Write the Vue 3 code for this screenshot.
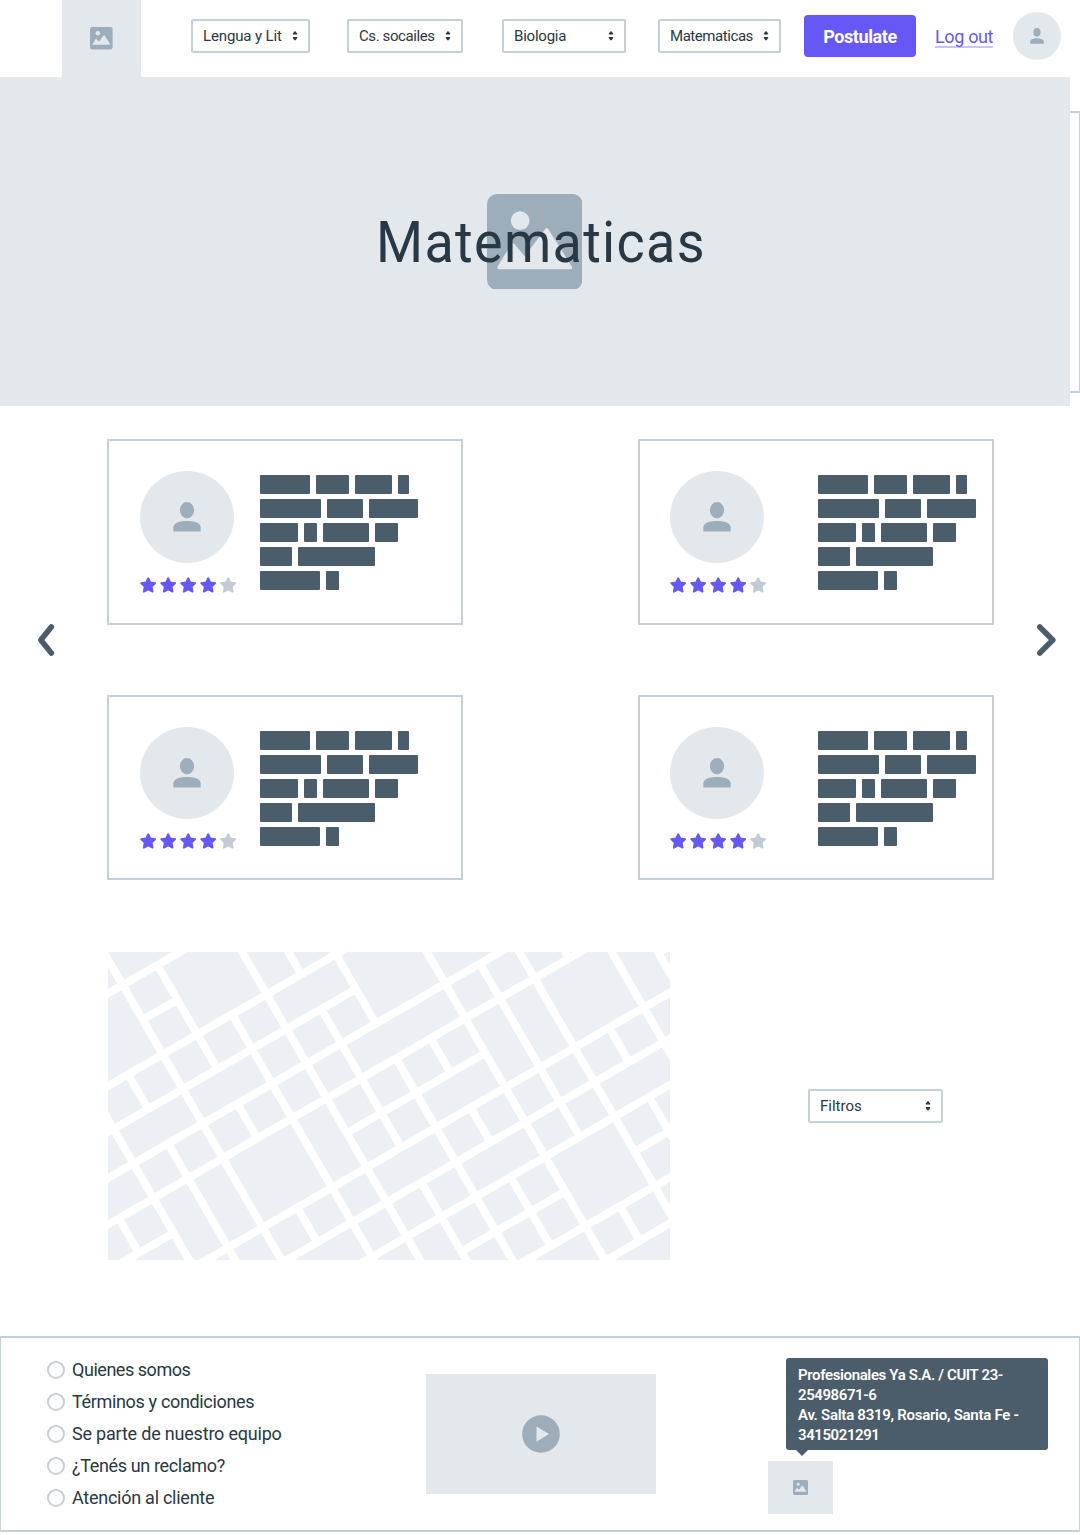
<script setup>
import { h } from 'vue'

const subjects = [
  { label: 'Lengua y Lit', width: 119, gap: 37, spacing: -0.14 },
  { label: 'Cs. socailes', width: 116, gap: 39, spacing: -0.4 },
  { label: 'Biologia', width: 124, gap: 32, spacing: -0.22 },
  { label: 'Matematicas', width: 123, gap: 23, spacing: -0.44 }
]

const words = [
  [49.7, 33, 36.8, 11.4],
  [60.8, 36.1, 49],
  [38, 13, 45.6, 23],
  [31.8, 76.8],
  [60, 13]
]

const links = [
  { label: 'Quienes somos', spacing: -0.46 },
  { label: 'Términos y condiciones', spacing: -0.34 },
  { label: 'Se parte de nuestro equipo', spacing: -0.2 },
  { label: '¿Tenés un reclamo?', spacing: -0.35 },
  { label: 'Atención al cliente', spacing: -0.26 }
]

// Streets and avenues on a rotated grid: [fixed index, from, to]
const streets = [
  [1, -2, 3], [2, 0, 1], [3, -3, 7], [4, -4, 5], [5, -4, 10], [6, -5, 12],
  [7, -5, -2], [7, 3, 7], [7, 12, 14], [8, -3, 13], [9, 0, 13], [10, 1, 13],
  [11, 4, 7], [11, 9, 11], [12, 4, 12], [13, 6, 11]
]
const avenues = [
  [-3, 6, 7], [-2, 3, 9], [-1, 3, 4], [-1, 5, 10], [0, -1, 11],
  [1, 1, 4], [1, 5, 6], [1, 8, 9], [2, 3, 11], [3, 0, 12],
  [4, 1, 3], [4, 4, 8], [4, 9, 12], [5, 3, 5], [5, 6, 13],
  [6, 6, 7], [6, 8, 9], [6, 10, 12], [7, 2, 14], [8, 5, 9], [8, 9, 10], [8, 12, 13],
  [9, 4, 14], [10, 4, 6], [10, 8, 9], [10, 10, 12], [11, 5, 11], [12, 6, 9]
]
const at = (n) => n * 40 - 4
const roads = [
  ...streets.map(([j, a, b]) => `M${at(a)} ${at(j)}H${at(b)}`),
  ...avenues.map(([i, a, b]) => `M${at(i) + 0.2} ${at(a)}V${at(b)}`)
].join('')

const PictureIcon = () =>
  h('svg', { viewBox: '0 0 96 96' }, [
    h('rect', { width: 96, height: 96, rx: 10, fill: '#9eadba' }),
    h('circle', { cx: 33.3, cy: 26.7, r: 9.4, fill: '#e2e8ec' }),
    h('path', {
      fill: '#e2e8ec',
      d: 'M10.5 73 L24.3 50.5 Q26 48.3 27.7 50.5 L37.8 62.5 L58.3 35.3 Q60 33 61.7 35.3 L85.3 73 Q86 75.5 84 75.5 H12 Q9.8 75.5 10.5 73z'
    })
  ])

const PersonIcon = () =>
  h('svg', { viewBox: '0 0 28 30', preserveAspectRatio: 'none', fill: '#9eadba' }, [
    h('ellipse', { cx: 14, cy: 8.2, rx: 7.1, ry: 8.2 }),
    h('path', { d: 'M.3 29.6V25.3C.3 20.5 8 19 14 19s13.7 1.5 13.7 6.3v4.3z' })
  ])

const SortIcon = () =>
  h('svg', { viewBox: '0 0 6 10', width: 6, height: 10, fill: '#293845' }, [
    h('path', { d: 'M3 0 Q3.4 0 5.2 2.6 Q5.5 3.5 4.7 3.5 H1.3 Q.5 3.5 .8 2.6 Q2.6 0 3 0zM3 9.6 Q3.4 9.6 5.2 7 Q5.5 6.1 4.7 6.1 H1.3 Q.5 6.1 .8 7 Q2.6 9.6 3 9.6z' })
  ])
</script>

<template>
  <div class="page">
    <header class="header">
      <div class="logo"><PictureIcon class="logo-icon" /></div>
      <nav class="subjects">
        <div
          v-for="s in subjects"
          :key="s.label"
          class="select"
          :style="{ width: s.width + 'px', marginRight: s.gap + 'px' }"
        >
          <span :style="{ letterSpacing: s.spacing + 'px' }">{{ s.label }}</span>
          <SortIcon />
        </div>
      </nav>
      <button class="primary">Postulate</button>
      <a class="logout">Log out</a>
      <div class="avatar small"><PersonIcon class="person" /></div>
    </header>

    <section class="hero-row">
      <div class="hero">
        <PictureIcon class="hero-icon" />
        <h1>Matematicas</h1>
      </div>
      <div class="hero-peek"></div>
    </section>

    <section class="carousel">
      <svg class="chevron" width="20" height="34" viewBox="0 0 20 34">
        <path d="M15.3 4 L4.8 17 L15.3 30" />
      </svg>
      <div class="cards">
        <article v-for="n in 4" :key="n" class="card" :class="{ wide: n % 2 === 0 }">
          <div class="profile">
            <div class="avatar large"><PersonIcon class="person" /></div>
            <div class="stars">
              <svg v-for="s in 5" :key="s" width="17" height="16" viewBox="0 0 17 16" :class="{ off: s === 5 }">
                <path d="M8.2 1.2 L10.3 5.5 L15.2 6.2 L11.7 9.6 L12.6 14.7 L8.2 12.4 L3.8 14.7 L4.7 9.6 L1.2 6.2 L6.1 5.5z" />
              </svg>
            </div>
          </div>
          <div class="bio">
            <div v-for="(row, r) in words" :key="r" class="bio-row">
              <i v-for="(w, k) in row" :key="k" :style="{ width: w + 'px' }"></i>
            </div>
          </div>
        </article>
      </div>
      <svg class="chevron" width="24" height="34" viewBox="0 0 24 34">
        <path d="M7.8 4 L20.8 17 L7.8 30" />
      </svg>
    </section>

    <section class="places">
      <svg class="map" width="562" height="308" viewBox="0 0 562 308">
        <rect width="562" height="308" fill="#ecf0f5" />
        <path :d="roads" transform="rotate(-30)" fill="none" stroke="#fff" stroke-width="7.8" />
      </svg>
      <div class="select filter"><span>Filtros</span><SortIcon /></div>
    </section>

    <footer class="footer">
      <ul class="links">
        <li v-for="l in links" :key="l.label">
          <i class="radio"></i><span :style="{ letterSpacing: l.spacing + 'px' }">{{ l.label }}</span>
        </li>
      </ul>
      <div class="video">
        <svg width="38" height="38" viewBox="0 0 38 38">
          <circle cx="19" cy="19" r="18.8" fill="#9eadba" />
          <path d="M14.5 11.5 L27 19 L14.5 26.8z" fill="#e2e8ec" />
        </svg>
      </div>
      <div class="contact">
        <div class="tooltip">
          <div class="company">Profesionales Ya S.A. / CUIT 23-</div>
          <div class="digits">25498671-6</div>
          <div class="address">Av. Salta 8319, Rosario, Santa Fe -</div>
          <div class="digits">3415021291</div>
        </div>
        <div class="thumb"><PictureIcon class="thumb-icon" /></div>
      </div>
    </footer>
  </div>
</template>

<style>
body { background: #fff; }
</style>

<style scoped>
* { box-sizing: border-box; }
svg { display: block; flex: none; }
.page {
  width: 1080px;
  height: 1535px;
  overflow: hidden;
  background: #fff;
  color: #293845;
  font-family: Roboto, "Liberation Sans", sans-serif;
}
.header { display: flex; align-items: flex-start; height: 77px; padding-left: 62px; }
.logo {
  display: flex;
  justify-content: center;
  width: 79px;
  height: 77px;
  padding-top: 27.3px;
  background: #e2e8ec;
}
.logo-icon { width: 22.6px; height: 22.6px; }
.subjects { display: flex; padding: 19px 0 0 50px; }
.select {
  display: flex;
  flex: none;
  align-items: center;
  justify-content: space-between;
  height: 34px;
  padding: 0 10px 1px;
  border: 2px solid #c3cfd9;
  border-radius: 2px;
  font-size: 15px;
  white-space: nowrap;
}
.primary {
  flex: none;
  width: 112px;
  height: 42px;
  margin-top: 15px;
  padding: 2px 0 0;
  border: 0;
  border-radius: 4px;
  background: #6558f5;
  color: #fff;
  font: 700 18px/40px Roboto, sans-serif;
  letter-spacing: -0.4px;
}
.logout {
  flex: none;
  width: 58px;
  height: 21px;
  margin: 27px 0 0 19px;
  border-bottom: 2px solid #c8c3fb;
  color: #6558f5;
  font-size: 18px;
  line-height: 20px;
  letter-spacing: -0.35px;
  white-space: nowrap;
}
.avatar { display: flex; flex: none; justify-content: center; border-radius: 50%; background: #e2e8ec; }
.small { width: 48px; height: 48px; margin: 12px 0 0 20px; padding-top: 16px; }
.small .person { width: 14px; height: 16px; }
.large { width: 94px; height: 92px; padding-top: 31px; }
.large .person { width: 28px; height: 30px; }

.hero-row { display: flex; height: 329px; }
.hero { position: relative; width: 1070px; background: #e2e8ec; }
.hero-icon { position: absolute; left: 486.6px; top: 116.5px; width: 95.6px; height: 95.6px; }
.hero h1 {
  position: relative;
  width: 360px;
  margin: 0 0 0 375.5px;
  padding-top: 130px;
  font-size: 58px;
  font-weight: 400;
  line-height: 70px;
  letter-spacing: 1.4px;
  transform: scaleX(0.93);
  transform-origin: left;
}
.hero-peek { width: 10px; height: 282px; margin-top: 34px; border: 2px solid #c3cfd9; border-width: 2px 1px 2px 0; }

.carousel { display: flex; align-items: center; height: 468px; padding-left: 36px; }
.chevron { fill: none; stroke: #4b5c6b; stroke-width: 5.6; stroke-linecap: round; stroke-linejoin: round; }
.cards {
  display: grid;
  grid-template-columns: 356px 356px;
  grid-template-rows: 186px 185px;
  gap: 70px 175px;
  margin: 39px 38px 0 51px;
}
.card { display: flex; padding: 30px 0 0 31px; border: 2px solid #c3cfd9; }
.profile { width: 120px; }
.wide .profile { width: 148px; }
.wide { padding-left: 30px; }
.stars { display: flex; gap: 3px; margin-top: 14px; }
.stars path { fill: #6558f5; stroke: #6558f5; stroke-width: 1.8; stroke-linejoin: round; }
.stars .off path { fill: #c3cad4; stroke: #c3cad4; }
.bio { display: flex; flex-direction: column; gap: 5px; padding-top: 4px; }
.bio-row { display: flex; gap: 6.1px; height: 19px; }
.bio-row i { flex: none; border-radius: 1px; background: #4b5c6b; }

.places { display: flex; height: 308px; margin-top: 78px; padding-left: 108px; }
.filter { width: 135px; margin: 137px 0 0 138px; }

.footer { display: flex; height: 196px; margin-top: 76px; border: 2px solid #c3cfd9; border-width: 2px 1px; }
.links { width: 379px; margin: 0; padding: 16px 0 0 46px; list-style: none; }
.links li { display: flex; align-items: center; gap: 7px; height: 32px; font-size: 18px; white-space: nowrap; }
.links span { padding-bottom: 2px; }
.radio { width: 18px; height: 18px; border: 2px solid #c3cfd9; border-radius: 50%; }
.video {
  display: flex;
  align-items: center;
  justify-content: center;
  width: 230px;
  height: 120px;
  margin: 36px 0 0 46px;
  background: #e2e8ec;
}
.contact { margin: 20px 0 0 112px; }
.tooltip {
  position: relative;
  width: 262px;
  height: 92px;
  margin-left: 18px;
  padding: 7px 12px;
  border-radius: 3px;
  background: #4b5c6b;
  color: #fff;
  font-size: 15px;
  font-weight: 600;
  line-height: 20px;
  white-space: nowrap;
}
.company { letter-spacing: -0.37px; }
.digits { letter-spacing: -0.42px; }
.address { letter-spacing: -0.27px; }
.tooltip::after {
  content: "";
  position: absolute;
  left: 10px;
  top: 92px;
  border: 6px solid transparent;
  border-top-color: #4b5c6b;
  border-bottom: 0;
}
.thumb { display: flex; justify-content: center; width: 65px; height: 53px; margin-top: 11px; padding-top: 19px; background: #e2e8ec; }
.thumb-icon { width: 15px; height: 15px; }
</style>
